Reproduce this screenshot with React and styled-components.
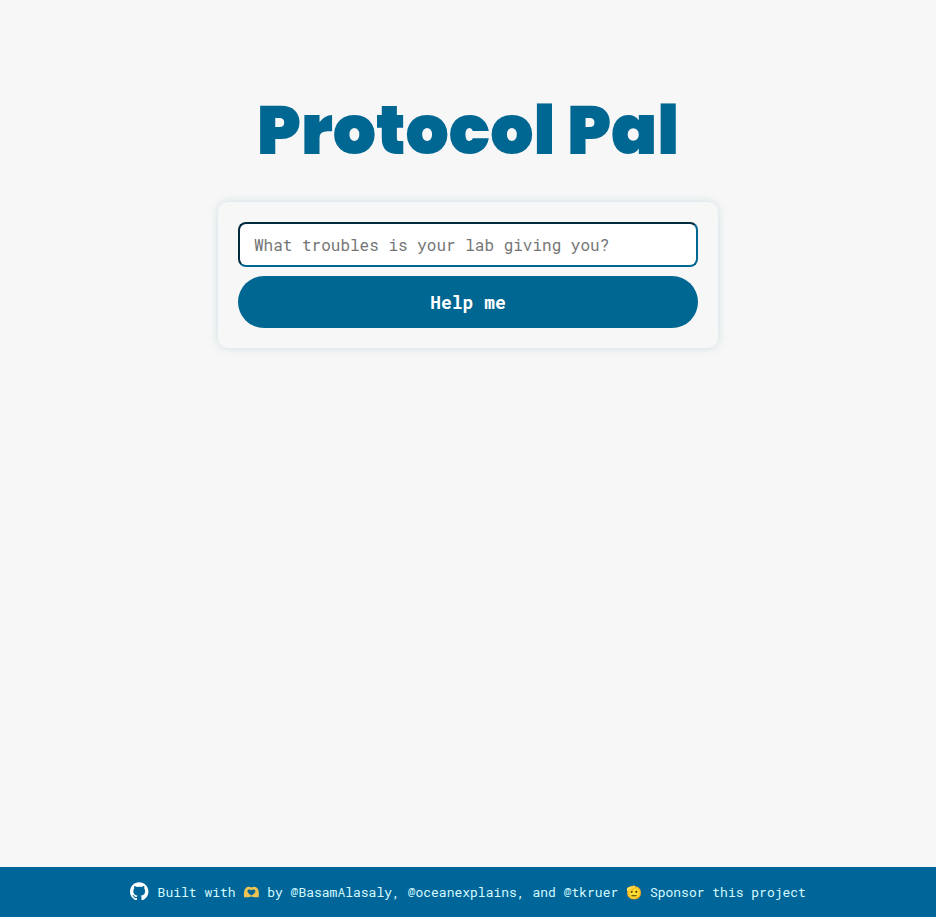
import React from "react";
import styled, { createGlobalStyle } from "styled-components";

const mono = '"Roboto Mono", "Liberation Mono", monospace';

const GlobalStyle = createGlobalStyle`
  *, *::before, *::after { box-sizing: border-box; }
  body { margin: 0; background: #f7f7f7; font-family: ${mono}; }
`;

const Page = styled.div`
  min-height: 100vh;
  display: flex;
  flex-direction: column;
  align-items: center;
`;

const Main = styled.main`
  flex: 1;
  width: 500px;
  padding-top: 80px;
`;

const Title = styled.h1`
  margin: 0;
  height: 122px;
  line-height: 102px;
  font-family: Poppins, Inter, sans-serif;
  font-size: 68px;
  font-weight: 900;
  color: #006692;
  text-align: center;
  white-space: nowrap;
`;

const Card = styled.form`
  display: flex;
  flex-direction: column;
  gap: 9px;
  height: 146px;
  padding: 20px;
  border-radius: 10px;
  box-shadow: 0 0 10px rgba(0, 102, 130, 0.17);
`;

const Input = styled.input`
  width: 100%;
  height: 45px;
  padding: 0 14px;
  border: 2px inset #006692;
  border-radius: 8px;
  background: #fff;
  font-family: ${mono};
  font-size: 16px;
  &::placeholder { color: #757575; }
`;

const Button = styled.button`
  width: 100%;
  height: 52px;
  padding: 0;
  border: 0;
  border-radius: 26px;
  background: #006692;
  color: #fff;
  font-family: ${mono};
  font-size: 18px;
  font-weight: 700;
`;

const Footer = styled.footer`
  width: 100%;
  height: 50px;
  display: flex;
  align-items: center;
  justify-content: center;
  background: #006699;
  color: #d5faff;
  font-size: 13px;
  white-space: pre;
`;

const GitHubMark = styled.svg`
  width: 18.5px;
  height: 18.5px;
  margin: 0 9px 2px 0;
  fill: #fff;
`;

const HeartHands = styled.svg`
  width: 16px;
  height: 12px;
`;

const Emoji = styled.span`
  width: 16px;
  font-family: "Noto Color Emoji", sans-serif;
`;

export default function App() {
  return (
    <Page>
      <GlobalStyle />
      <Main>
        <Title>Protocol Pal</Title>
        <Card onSubmit={(e) => e.preventDefault()}>
          <Input placeholder="What troubles is your lab giving you?" />
          <Button>Help me</Button>
        </Card>
      </Main>
      <Footer>
        <GitHubMark viewBox="0 0 98 96" aria-label="GitHub">
          <path d="M48.854 0C21.839 0 0 22 0 49.217c0 21.756 13.993 40.172 33.405 46.69 2.427.49 3.316-1.059 3.316-2.362 0-1.141-.08-5.052-.08-9.127-13.59 2.934-16.42-5.867-16.42-5.867-2.184-5.704-5.42-7.17-5.42-7.17-4.448-3.015.324-3.015.324-3.015 4.934.326 7.523 5.052 7.523 5.052 4.367 7.496 11.404 5.378 14.235 4.074.404-3.178 1.699-5.378 3.074-6.6-10.839-1.141-22.243-5.378-22.243-24.283 0-5.378 1.94-9.778 5.014-13.2-.485-1.222-2.184-6.275.486-13.038 0 0 4.125-1.304 13.426 5.052a46.97 46.97 0 0 1 12.214-1.63c4.125 0 8.33.571 12.213 1.63 9.302-6.356 13.427-5.052 13.427-5.052 2.67 6.763.97 11.816.485 13.038 3.155 3.422 5.015 7.822 5.015 13.2 0 18.905-11.404 23.06-22.324 24.283 1.78 1.548 3.316 4.481 3.316 9.126 0 6.6-.08 11.897-.08 13.526 0 1.304.89 2.853 3.316 2.364 19.412-6.52 33.405-24.935 33.405-46.691C97.707 22 75.788 0 48.854 0z" />
        </GitHubMark>
        <span>Built with </span>
        <HeartHands viewBox="0 0 16 12" aria-label="Heart hands">
          <path
            fill="#edc454"
            fillRule="evenodd"
            d="M1 11.2V6Q1.3 3.6 2.8 2 3.8.8 5.6.8q1.6 0 2.8.7Q9.6.8 11.1.8q1.8 0 3 1.2 1.4 1.6 1.7 4v5.2h-4.6l-2.8-.6-2.8.6zM8.4 9.6Q12 7.5 12.4 5.6 12.5 3.8 10.7 3.5 9.2 3.4 8.4 4.6 7.6 3.4 6.1 3.5 4.3 3.8 4.4 5.6 4.8 7.5 8.4 9.6z"
          />
        </HeartHands>
        <span> by @BasamAlasaly, @oceanexplains, and @tkruer </span>
        <Emoji>🫡</Emoji>
        <span> Sponsor this project</span>
      </Footer>
    </Page>
  );
}
